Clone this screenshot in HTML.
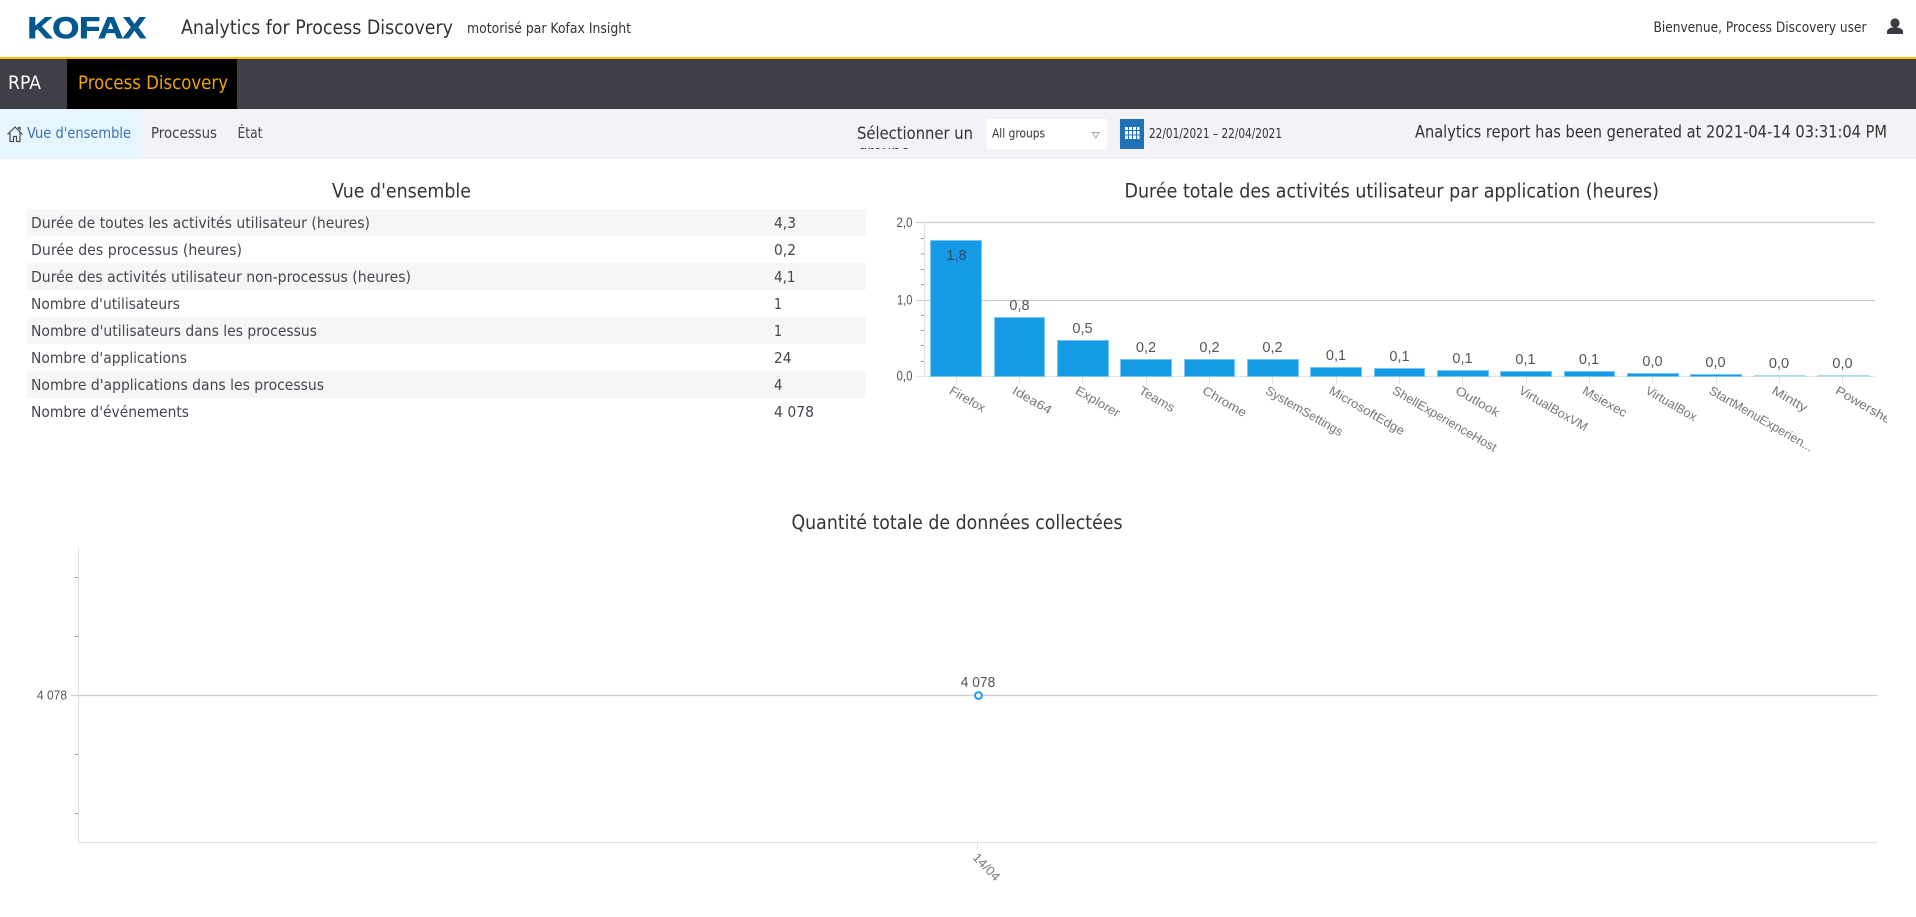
<!DOCTYPE html>
<html lang="fr">
<head>
<meta charset="utf-8">
<title>Analytics for Process Discovery</title>
<style>
html,body{margin:0;padding:0;width:1916px;height:917px;overflow:hidden;background:#fff}
svg{display:block}
text{font-family:"DejaVu Sans","Liberation Sans",sans-serif;fill:#333;white-space:pre}
.lab{font-size:15.5px;fill:#464650}
.val{font-size:15.5px;fill:#464650}
.title{font-size:19.5px;fill:#333}
.ch{font-family:"Liberation Sans",sans-serif;fill:#555}
.bv{font-family:"Liberation Sans",sans-serif;font-size:14.5px;fill:#555;text-anchor:middle}
.xl{font-family:"Liberation Sans",sans-serif;font-size:12.5px;fill:#777}
.bar{fill:#159ae6;stroke:#78c6f1;stroke-width:1}
.grid{stroke:#ccc;stroke-width:1.2}
.ax{stroke:#e2e2e2;stroke-width:1.2}
.tk{stroke:#999;stroke-width:1}
</style>
</head>
<body>
<svg width="1916" height="917" viewBox="0 0 1916 917" xmlns="http://www.w3.org/2000/svg">
<defs>
<clipPath id="c1"><rect x="850" y="110" width="140" height="39"/></clipPath>
<clipPath id="c2"><rect x="0" y="380" width="1887" height="120"/></clipPath>
</defs>

<!-- header -->
<rect width="1916" height="57" fill="#fff"/>
<rect y="57" width="1916" height="2" fill="#ffc000"/>
<text x="27.5" y="37.8" textLength="118.5" lengthAdjust="spacingAndGlyphs" style="font-family:'Liberation Sans',sans-serif;font-weight:700;font-size:30px;fill:#00588f;stroke:#00588f;stroke-width:.9">KOFAX</text>
<text x="181" y="34" textLength="272" lengthAdjust="spacingAndGlyphs" style="font-size:19.5px">Analytics for Process Discovery</text>
<text x="467" y="33" textLength="164" lengthAdjust="spacingAndGlyphs" style="font-size:14.5px">motorisé par Kofax Insight</text>
<text x="1653.5" y="32" textLength="213" lengthAdjust="spacingAndGlyphs" style="font-size:14.5px">Bienvenue, Process Discovery user</text>
<circle cx="1895" cy="23" r="4.6" fill="#3a3a44"/>
<path d="M1887 34v-2.5c0-2.6 4-4.2 8-4.2s8 1.600 8 4.200V34z" fill="#3a3a44"/>

<!-- nav -->
<rect y="59" width="1916" height="50" fill="#3f3f48"/>
<rect x="67" y="59" width="170" height="50" fill="#000"/>
<text x="8" y="89" textLength="33" lengthAdjust="spacingAndGlyphs" style="font-size:18.5px;fill:#fff">RPA</text>
<text x="78" y="89" textLength="150" lengthAdjust="spacingAndGlyphs" style="font-size:19px;fill:#f0a30a">Process Discovery</text>

<!-- subnav -->
<rect y="109" width="1916" height="50" fill="#f2f2f7"/>
<rect y="109" width="141" height="50" fill="#e6f6ff"/>
<path d="M7.5 134.5 15 127l7.5 7.5M10 132.5v9h3.5v-5h3v5H20v-9M18.5 129v-1.5h1.500v3" fill="none" stroke="#4a4a52" stroke-width="1.2"/>
<text x="27" y="138" textLength="104" lengthAdjust="spacingAndGlyphs" style="font-size:15px;fill:#3f6fae">Vue d'ensemble</text>
<text x="151" y="138" textLength="66" lengthAdjust="spacingAndGlyphs" style="font-size:15px;fill:#444">Processus</text>
<text x="237.5" y="138" textLength="25" lengthAdjust="spacingAndGlyphs" style="font-size:15px;fill:#444">État</text>

<g clip-path="url(#c1)">
<text x="857" y="139" textLength="116" lengthAdjust="spacingAndGlyphs" style="font-size:17px">Sélectionner un</text>
<text x="858" y="157.5" textLength="52" lengthAdjust="spacingAndGlyphs" style="font-size:17px">groupe</text>
</g>
<rect x="987" y="119" width="120" height="30" fill="#fff"/>
<text x="992" y="137.5" textLength="53" lengthAdjust="spacingAndGlyphs" style="font-size:12.5px;fill:#333">All groups</text>
<path d="M1092.5 132.5h6.5l-3.25 5.500z" fill="none" stroke="#aaa" stroke-width="1"/>
<rect x="1120" y="119" width="24" height="30" fill="#1f72b8"/>
<g fill="#fff">
<rect x="1125" y="127" width="3" height="3"/><rect x="1129" y="127" width="3" height="3"/><rect x="1133" y="127" width="3" height="3"/><rect x="1137" y="127" width="2.5" height="3"/>
<rect x="1125" y="131" width="3" height="3.5"/><rect x="1129" y="131" width="3" height="3.5"/><rect x="1133" y="131" width="3" height="3.5"/><rect x="1137" y="131" width="2.5" height="3.5"/>
<rect x="1125" y="135.5" width="3" height="3.5"/><rect x="1129" y="135.5" width="3" height="3.5"/><rect x="1133" y="135.5" width="3" height="3.5"/><rect x="1137" y="135.5" width="2.5" height="3.5"/>
</g>
<text x="1149" y="138" textLength="133" lengthAdjust="spacingAndGlyphs" style="font-size:13px">22/01/2021 – 22/04/2021</text>
<text x="1415" y="137.5" textLength="472" lengthAdjust="spacingAndGlyphs" style="font-size:17px">Analytics report has been generated at 2021-04-14 03:31:04 PM</text>

<!-- table -->
<text class="title" x="332" y="197.5" textLength="139" lengthAdjust="spacingAndGlyphs">Vue d'ensemble</text>
<rect x="27" y="209" width="839" height="27" fill="#f6f6f6"/>
<rect x="27" y="263" width="839" height="27" fill="#f6f6f6"/>
<rect x="27" y="317" width="839" height="27" fill="#f6f6f6"/>
<rect x="27" y="371" width="839" height="27" fill="#f6f6f6"/>
<text class="lab" x="31" y="228" textLength="339" lengthAdjust="spacingAndGlyphs">Durée de toutes les activités utilisateur (heures)</text>
<text class="lab" x="31" y="255" textLength="211" lengthAdjust="spacingAndGlyphs">Durée des processus (heures)</text>
<text class="lab" x="31" y="282" textLength="380" lengthAdjust="spacingAndGlyphs">Durée des activités utilisateur non-processus (heures)</text>
<text class="lab" x="31" y="309" textLength="149" lengthAdjust="spacingAndGlyphs">Nombre d'utilisateurs</text>
<text class="lab" x="31" y="336" textLength="286" lengthAdjust="spacingAndGlyphs">Nombre d'utilisateurs dans les processus</text>
<text class="lab" x="31" y="363" textLength="156" lengthAdjust="spacingAndGlyphs">Nombre d'applications</text>
<text class="lab" x="31" y="390" textLength="293" lengthAdjust="spacingAndGlyphs">Nombre d'applications dans les processus</text>
<text class="lab" x="31" y="417" textLength="158" lengthAdjust="spacingAndGlyphs">Nombre d'événements</text>
<text class="val" x="774" y="228" textLength="22" lengthAdjust="spacingAndGlyphs">4,3</text>
<text class="val" x="774" y="255" textLength="22" lengthAdjust="spacingAndGlyphs">0,2</text>
<text class="val" x="774" y="282" textLength="21.5" lengthAdjust="spacingAndGlyphs">4,1</text>
<text class="val" x="774" y="309" textLength="8" lengthAdjust="spacingAndGlyphs">1</text>
<text class="val" x="774" y="336" textLength="8" lengthAdjust="spacingAndGlyphs">1</text>
<text class="val" x="774" y="363" textLength="17.5" lengthAdjust="spacingAndGlyphs">24</text>
<text class="val" x="774" y="390" textLength="8.5" lengthAdjust="spacingAndGlyphs">4</text>
<text class="val" x="774" y="417" textLength="40" lengthAdjust="spacingAndGlyphs">4 078</text>

<!-- bar chart -->
<text class="title" x="1124.5" y="197.5" textLength="534.5" lengthAdjust="spacingAndGlyphs">Durée totale des activités utilisateur par application (heures)</text>
<line class="grid" x1="916" y1="222.5" x2="1875" y2="222.5"/>
<line class="grid" x1="916" y1="300.5" x2="1875" y2="300.5"/>
<line class="ax" x1="924.5" y1="222" x2="924.5" y2="376"/>
<line class="ax" x1="916" y1="376.5" x2="1875" y2="376.5"/>
<g class="tk">
<line x1="921" x2="924" y1="238.5" y2="238.5"/><line x1="921" x2="924" y1="254" y2="254"/><line x1="921" x2="924" y1="269.5" y2="269.5"/><line x1="921" x2="924" y1="284.5" y2="284.5"/>
<line x1="921" x2="924" y1="315.5" y2="315.5"/><line x1="921" x2="924" y1="330.5" y2="330.5"/><line x1="921" x2="924" y1="345.5" y2="345.5"/><line x1="921" x2="924" y1="361.5" y2="361.5"/>
</g>
<text class="ch" x="896.5" y="227" textLength="16" lengthAdjust="spacingAndGlyphs" style="font-size:13.5px">2,0</text>
<text class="ch" x="897" y="304.5" textLength="15.5" lengthAdjust="spacingAndGlyphs" style="font-size:13.5px">1,0</text>
<text class="ch" x="896.5" y="380.5" textLength="16" lengthAdjust="spacingAndGlyphs" style="font-size:13.5px">0,0</text>
<rect class="bar" x="930.5" y="240.5" width="51" height="136"/>
<rect class="bar" x="994.5" y="317.5" width="50" height="59"/>
<rect class="bar" x="1057.5" y="340.5" width="51" height="36"/>
<rect class="bar" x="1120.5" y="359.5" width="51" height="17"/>
<rect class="bar" x="1184.5" y="359.5" width="50" height="17"/>
<rect class="bar" x="1247.5" y="359.5" width="51" height="17"/>
<rect class="bar" x="1310.5" y="367.5" width="51" height="9"/>
<rect class="bar" x="1374.5" y="368.5" width="50" height="8"/>
<rect class="bar" x="1437.5" y="370.5" width="51" height="6"/>
<rect class="bar" x="1500.5" y="371.5" width="51" height="5"/>
<rect class="bar" x="1564.5" y="371.5" width="50" height="5"/>
<rect class="bar" x="1627.5" y="373.5" width="51" height="3"/>
<rect class="bar" x="1690.5" y="374.5" width="51" height="2"/>
<rect x="1754" y="375" width="51" height="1.5" fill="#a9d8ee"/>
<rect x="1817" y="375" width="52" height="1.5" fill="#a9d8ee"/>
<g stroke="#e2e2e2" stroke-width="1">
<line x1="956.5" x2="956.5" y1="377" y2="384"/><line x1="1019.5" x2="1019.5" y1="377" y2="384"/><line x1="1082.5" x2="1082.5" y1="377" y2="384"/><line x1="1146.5" x2="1146.5" y1="377" y2="384"/><line x1="1209.5" x2="1209.5" y1="377" y2="384"/><line x1="1272.5" x2="1272.5" y1="377" y2="384"/><line x1="1336.5" x2="1336.5" y1="377" y2="384"/><line x1="1399.5" x2="1399.5" y1="377" y2="384"/><line x1="1462.5" x2="1462.5" y1="377" y2="384"/><line x1="1526.5" x2="1526.5" y1="377" y2="384"/><line x1="1589.5" x2="1589.5" y1="377" y2="384"/><line x1="1652.5" x2="1652.5" y1="377" y2="384"/><line x1="1716.5" x2="1716.5" y1="377" y2="384"/><line x1="1779.5" x2="1779.5" y1="377" y2="384"/><line x1="1842.5" x2="1842.5" y1="377" y2="384"/>
</g>
<text class="bv" x="956.5" y="260" style="fill:#2b4a66">1,8</text>
<text class="bv" x="1019.5" y="310">0,8</text>
<text class="bv" x="1082.5" y="333">0,5</text>
<text class="bv" x="1146" y="352">0,2</text>
<text class="bv" x="1209.5" y="352">0,2</text>
<text class="bv" x="1272.5" y="352">0,2</text>
<text class="bv" x="1336" y="360">0,1</text>
<text class="bv" x="1399.5" y="361">0,1</text>
<text class="bv" x="1462.5" y="363">0,1</text>
<text class="bv" x="1525.5" y="364">0,1</text>
<text class="bv" x="1589" y="364">0,1</text>
<text class="bv" x="1652.5" y="366">0,0</text>
<text class="bv" x="1715.5" y="367">0,0</text>
<text class="bv" x="1779" y="368">0,0</text>
<text class="bv" x="1842.5" y="368">0,0</text>
<g clip-path="url(#c2)">
<text class="xl" transform="translate(948.5 393) rotate(30)" textLength="39" lengthAdjust="spacingAndGlyphs">Firefox</text>
<text class="xl" transform="translate(1011.5 393) rotate(30)" textLength="43" lengthAdjust="spacingAndGlyphs">Idea64</text>
<text class="xl" transform="translate(1074.5 393) rotate(30)" textLength="49" lengthAdjust="spacingAndGlyphs">Explorer</text>
<text class="xl" transform="translate(1138 393) rotate(30)" textLength="39" lengthAdjust="spacingAndGlyphs">Teams</text>
<text class="xl" transform="translate(1201.5 393) rotate(30)" textLength="48.5" lengthAdjust="spacingAndGlyphs">Chrome</text>
<text class="xl" transform="translate(1264.5 393) rotate(30)" textLength="87" lengthAdjust="spacingAndGlyphs">SystemSettings</text>
<text class="xl" transform="translate(1328 393) rotate(30)" textLength="85" lengthAdjust="spacingAndGlyphs">MicrosoftEdge</text>
<text class="xl" transform="translate(1391.5 393) rotate(30)" textLength="118" lengthAdjust="spacingAndGlyphs">ShellExperienceHost</text>
<text class="xl" transform="translate(1454.5 393) rotate(30)" textLength="48.5" lengthAdjust="spacingAndGlyphs">Outlook</text>
<text class="xl" transform="translate(1518 393) rotate(30)" textLength="77" lengthAdjust="spacingAndGlyphs">VirtualBoxVM</text>
<text class="xl" transform="translate(1581.5 393) rotate(30)" textLength="49" lengthAdjust="spacingAndGlyphs">Msiexec</text>
<text class="xl" transform="translate(1644.5 393) rotate(30)" textLength="57" lengthAdjust="spacingAndGlyphs">VirtualBox</text>
<text class="xl" transform="translate(1708 393) rotate(30)" textLength="118" lengthAdjust="spacingAndGlyphs">StartMenuExperien...</text>
<text class="xl" transform="translate(1771 393) rotate(30)" textLength="38.5" lengthAdjust="spacingAndGlyphs">Mintty</text>
<text class="xl" transform="translate(1834.5 393) rotate(30)" textLength="68" lengthAdjust="spacingAndGlyphs">Powershell</text>
</g>

<!-- line chart -->
<text class="title" x="791.5" y="529" textLength="331" lengthAdjust="spacingAndGlyphs">Quantité totale de données collectées</text>
<line class="ax" x1="78.5" y1="548" x2="78.5" y2="842"/>
<line class="ax" x1="78" y1="842.5" x2="1877" y2="842.5"/>
<line class="grid" x1="71" y1="695.5" x2="1877" y2="695.5"/>
<g class="tk">
<line x1="75" x2="78" y1="577.5" y2="577.5"/><line x1="75" x2="78" y1="636.5" y2="636.5"/><line x1="75" x2="78" y1="754.5" y2="754.5"/><line x1="75" x2="78" y1="813.5" y2="813.5"/>
</g>
<text class="ch" x="37" y="699.5" textLength="30" lengthAdjust="spacingAndGlyphs" style="font-size:12.5px">4 078</text>
<circle cx="978.5" cy="695.5" r="3.4" fill="#fff" stroke="#1e9be8" stroke-width="2"/>
<text class="bv" x="978" y="687" textLength="34.5" lengthAdjust="spacingAndGlyphs">4 078</text>
<line x1="977.5" x2="977.5" y1="843" y2="849.5" stroke="#e2e2e2"/>
<text class="xl" transform="translate(972 858) rotate(46)" textLength="33" lengthAdjust="spacingAndGlyphs">14/04</text>
</svg>
</body>
</html>
